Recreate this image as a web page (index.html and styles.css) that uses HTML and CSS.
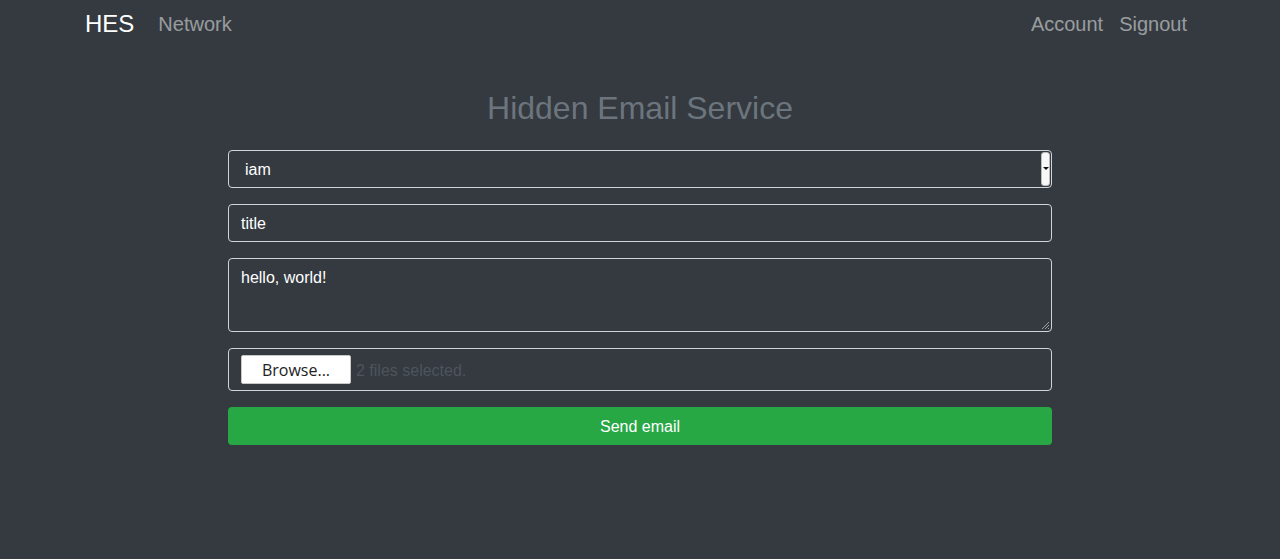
FILE: index.html
```html
<!DOCTYPE html>
<html>
<head>
<meta charset="utf-8">
<link rel="stylesheet" href="styles.css">
</head>
<body>
<nav class="navbar">
  <div class="nav-left">
    <span class="brand">HES</span>
    <span class="nav-link">Network</span>
  </div>
  <div class="nav-right">
    <span class="nav-link">Account</span>
    <span class="nav-link">Signout</span>
  </div>
</nav>
<main class="main">
  <h2 class="title">Hidden Email Service</h2>
  <form class="form">
    <div class="field select">
      <span class="select-value">iam</span>
      <span class="select-btn"><svg width="6" height="4" viewBox="0 0 6 4"><path d="M0 0H6L3 3Z" fill="#111"/></svg></span>
    </div>
    <div class="field input">title</div>
    <div class="field textarea">hello, world!
      <svg class="grip" width="9" height="9" viewBox="0 0 9 9"><path d="M8 1L1 8M8 4L4 8M8 7L7 8" stroke="#9aa0a6" stroke-width="1"/></svg>
    </div>
    <div class="field file">
      <span class="browse">Browse...</span>
      <span class="file-label">2 files selected.</span>
    </div>
    <div class="send">Send email</div>
  </form>
</main>
</body>
</html>
```
FILE: styles.css
```css
html, body {
  margin: 0;
  padding: 0;
  background: #343a40;
  font-family: "Liberation Sans", Arial, sans-serif;
  color: #fff;
}
.navbar {
  display: flex;
  justify-content: space-between;
  align-items: center;
  width: 1110px;
  margin: 0 auto;
  height: 48px;
}
.nav-left, .nav-right {
  display: flex;
  align-items: center;
}
.brand {
  font-size: 24px;
  color: #fff;
  margin-right: 16px;
}
.nav-link {
  font-size: 20px;
  color: rgba(255,255,255,0.5);
  padding: 0 8px;
}
.main {
  width: 824px;
  margin: 0 auto;
}
.title {
  margin: 41px 0 23px;
  text-align: center;
  font-weight: 400;
  font-size: 32px;
  line-height: 38px;
  color: #6c757d;
}
.form {
  display: flex;
  flex-direction: column;
  gap: 16px;
}
.field {
  box-sizing: border-box;
  border: 1px solid #ced4da;
  border-radius: 4px;
  font-size: 16px;
  color: #fff;
  position: relative;
}
.select {
  height: 38px;
  display: flex;
  align-items: center;
  padding-left: 16px;
  padding-top: 2px;
}
.select-btn {
  position: absolute;
  right: 1px;
  top: 1px;
  bottom: 1px;
  width: 9px;
  background: #f8f8f8;
  border: 1px solid #bbb;
  border-radius: 3px;
  display: flex;
  align-items: center;
  justify-content: center;
  box-sizing: border-box;
}
.input {
  height: 38px;
  display: flex;
  align-items: center;
  padding-left: 12px;
  padding-top: 2px;
}
.textarea {
  height: 74px;
  padding: 10px 12px;
  line-height: 18px;
}
.grip {
  position: absolute;
  right: 1px;
  bottom: 1px;
}
.file {
  height: 43px;
  display: flex;
  align-items: center;
  padding-left: 12px;
}
.browse {
  box-sizing: border-box;
  width: 110px;
  height: 29px;
  background: #fff;
  border: 1px solid #c8c8c8;
  border-radius: 2px;
  color: #222;
  font-family: "Open Sans", "Noto Sans", sans-serif;
  font-size: 16px;
  display: flex;
  align-items: center;
  justify-content: center;
}
.file-label {
  margin-left: 5px;
  color: #4e545b;
  font-size: 16px;
  padding-top: 2px;
}
.send {
  height: 38px;
  background: #28a745;
  border-radius: 4px;
  color: #fff;
  font-size: 16px;
  display: flex;
  align-items: center;
  justify-content: center;
  padding-top: 2px;
  box-sizing: border-box;
}
```
